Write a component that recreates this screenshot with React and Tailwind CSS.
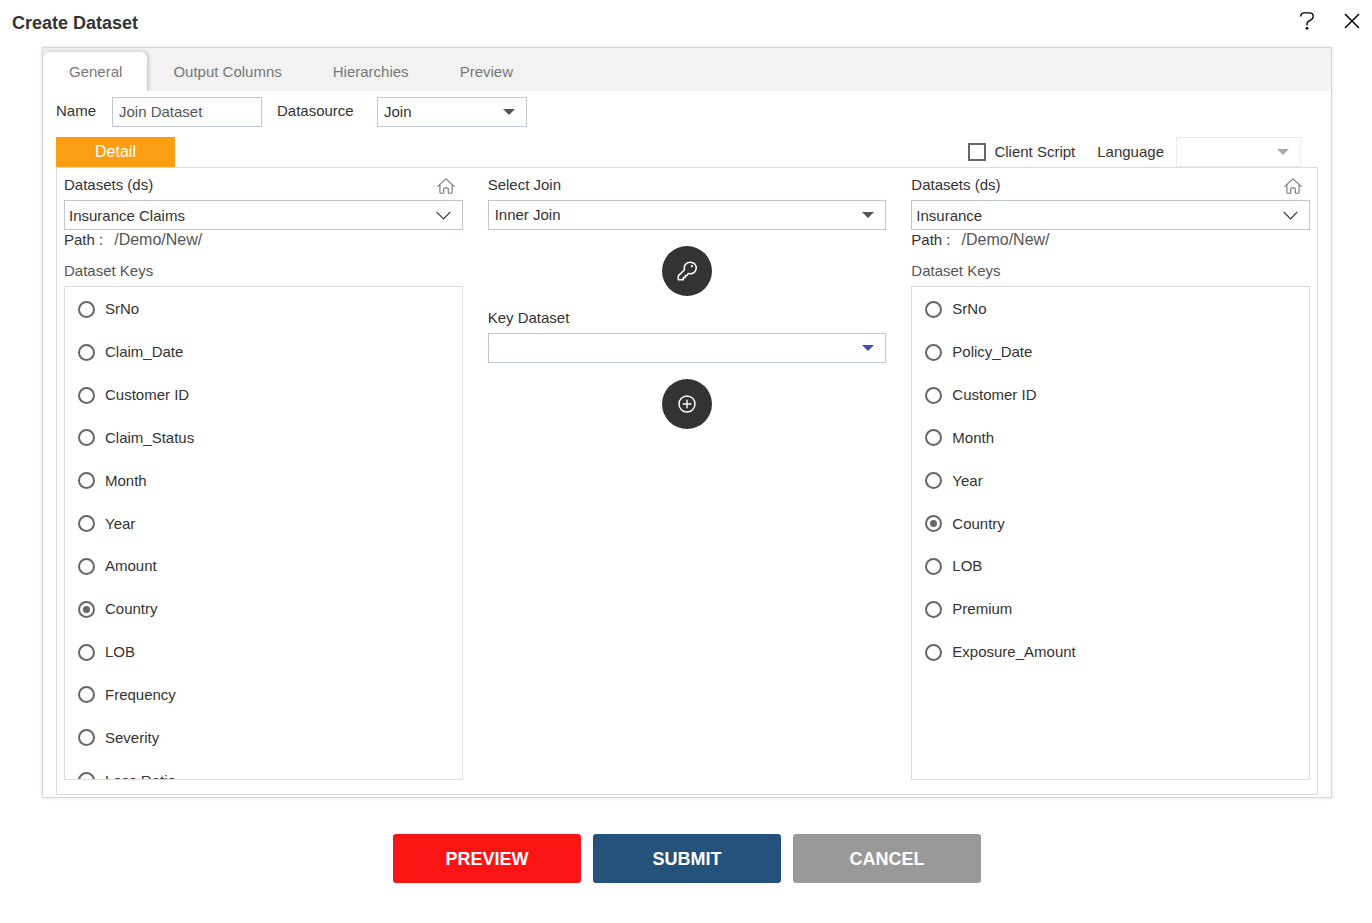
import React, { useState } from "react";

const TABS = ["General", "Output Columns", "Hierarchies", "Preview"];

const LEFT_KEYS = [
  "SrNo",
  "Claim_Date",
  "Customer ID",
  "Claim_Status",
  "Month",
  "Year",
  "Amount",
  "Country",
  "LOB",
  "Frequency",
  "Severity",
  "Loss Ratio",
];

const RIGHT_KEYS = [
  "SrNo",
  "Policy_Date",
  "Customer ID",
  "Month",
  "Year",
  "Country",
  "LOB",
  "Premium",
  "Exposure_Amount",
];

function HomeIcon() {
  return (
    <svg width="18" height="16" viewBox="0 0 18 16" fill="none" stroke="#777" strokeWidth="1.1" strokeLinecap="round" strokeLinejoin="round">
      <path d="M0.8 8.3 9 0.8l8.2 7.5" />
      <path d="M2.9 7v6.9c0 .8.5 1.3 1.3 1.3h2.5V11c0-.7.4-1.1 1.1-1.1h2.4c.7 0 1.1.4 1.1 1.1v4.2h2.5c.8 0 1.3-.5 1.3-1.3V7" />
    </svg>
  );
}

function KeyIcon() {
  return (
    <svg width="20" height="20" viewBox="0 0 20 20" fill="none" stroke="#fff" strokeWidth="1.5" strokeLinejoin="round">
      <path d="M13.1 1.2a5.8 5.8 0 0 0-5.6 7.5L1.3 14.9v3.9h5v-2.3h2v-2h1.9l1.1-2.1a5.8 5.8 0 1 0 1.8-11.2z" />
      <circle cx="14.9" cy="5.2" r="1.1" fill="#fff" stroke="none" />
    </svg>
  );
}

function PlusIcon() {
  return (
    <svg width="18" height="18" viewBox="0 0 18 18" fill="none" stroke="#fff" strokeWidth="1.4" strokeLinecap="round">
      <circle cx="9" cy="9" r="8" />
      <path d="M9 5.2v7.6M5.2 9h7.6" />
    </svg>
  );
}

/* Select with a filled triangle or a thin chevron on the right */
function SelectBox({ id, options, arrow = "triangle", className = "border-solid border-[#bfc7d5]", arrowColor = "text-[#555]", ...rest }) {
  return (
    <div className="relative h-[30px] w-full">
      <select
        id={id}
        className={`h-full w-full appearance-none border bg-white outline-none ${arrow === "chevron" ? "pt-0.5 pl-1" : "pl-1.5"} ${className}`}
        {...rest}
      >
        {options.map((option) => (
          <option key={option} value={option}>
            {option}
          </option>
        ))}
      </select>
      <span className={`pointer-events-none absolute inset-y-0 right-3 flex items-center ${arrowColor}`}>
        {arrow === "chevron" ? (
          <svg width="15" height="9" viewBox="0 0 15 9" fill="none" stroke="#333" strokeWidth="1.2">
            <path d="M0.6 0.9 7.5 7.8l6.9-6.9" />
          </svg>
        ) : (
          <svg width="12" height="6" viewBox="0 0 12 6" fill="currentColor">
            <path d="M0 0h12L6 6z" />
          </svg>
        )}
      </span>
    </div>
  );
}

function DatasetColumn({ side, dataset, keys, defaultKey }) {
  const [selected, setSelected] = useState(defaultKey);

  return (
    <div>
      <div className="flex h-8 items-center justify-between pt-0.5 pr-2">
        <label htmlFor={`${side}-dataset`}>Datasets (ds)</label>
        <button type="button" aria-label="Home" className="pt-0.5">
          <HomeIcon />
        </button>
      </div>
      <SelectBox id={`${side}-dataset`} options={[dataset]} arrow="chevron" />
      <div className="flex h-5 items-center gap-[11px]">
        <span>Path :</span>
        <span className="text-base text-[#555]">/Demo/New/</span>
      </div>
      <div className="flex h-9 items-center pt-1.5 text-[#555]">Dataset Keys</div>
      <div className="h-[494px] overflow-y-auto border border-[#ddd] pt-px [scrollbar-width:none]">
        <div role="radiogroup" aria-label="Dataset Keys" className="grid h-[514px] grid-rows-12 pl-[13px]">
          {keys.map((key) => (
            <label key={key} className="flex items-center gap-2.5">
              <input
                type="radio"
                name={`${side}-key`}
                checked={selected === key}
                onChange={() => setSelected(key)}
                className="grid size-[17px] appearance-none place-content-center rounded-full border-2 border-[#666] before:size-[7px] before:rounded-full checked:before:bg-[#666]"
              />
              <span>{key}</span>
            </label>
          ))}
        </div>
      </div>
    </div>
  );
}

export default function App() {
  const [activeTab, setActiveTab] = useState("General");
  const [name, setName] = useState("Join Dataset");

  return (
    <div className="bg-white font-['Liberation_Sans',Arial,sans-serif] text-[15px] leading-5 text-[#333]">
      {/* Header */}
      <header className="flex h-[47px] items-center justify-between px-3">
        <h1 className="pb-0.5 text-lg font-bold">Create Dataset</h1>
        <div className="flex items-center gap-[30px] pb-1.5">
          <button type="button" aria-label="Help">
            <svg width="14" height="18" viewBox="0 0 14 18" fill="none" stroke="#000" strokeWidth="1.4">
              <path d="M0.8 4.6V3.7C0.8 2 2.4.9 4.3.9h5.4c1.9 0 3.4 1.1 3.4 2.8v1.2c0 1.4-.8 2-1.8 2.7L8.4 9.4C7.3 10.2 7 10.8 7 12v1.6" />
              <circle cx="7" cy="16.3" r="1.4" fill="#000" stroke="none" />
            </svg>
          </button>
          <button type="button" aria-label="Close">
            <svg width="16" height="16" viewBox="0 0 16 16" fill="none" stroke="#000" strokeWidth="1.5">
              <path d="M1 1l14 14M15 1 1 15" />
            </svg>
          </button>
        </div>
      </header>

      <main className="pr-10 pl-[42px]">
        <section className="border border-[#d8d8d8] pb-0.5 shadow-[0_0_3px_rgba(0,0,0,0.15)]">
          {/* Tabs */}
          <div role="tablist" className="flex h-[43px] items-end overflow-hidden bg-[#f2f2f2] text-[#777]">
            {TABS.map((tab) => (
              <button
                key={tab}
                type="button"
                role="tab"
                aria-selected={activeTab === tab}
                onClick={() => setActiveTab(tab)}
                className={`h-[39px] rounded-t-md pr-[25px] pl-[26px] ${
                  activeTab === tab ? "bg-white shadow-[1px_0_4px_rgba(0,0,0,0.25)]" : ""
                }`}
              >
                {tab}
              </button>
            ))}
          </div>

          <div className="px-[13px] pt-1.5">
            {/* Name and source */}
            <div className="flex h-[30px] items-center">
              <label htmlFor="name" className="w-14 pb-0.5">Name</label>
              <input
                id="name"
                type="text"
                value={name}
                onChange={(e) => setName(e.target.value)}
                className="h-[30px] w-[150px] border border-[#bfc7d5] px-1.5 pb-0.5 text-[#555] outline-none"
              />
              <label htmlFor="datasource" className="ml-[15px] w-[100px] pb-0.5">Datasource</label>
              <div className="w-[150px]">
                <SelectBox id="datasource" options={["Join"]} />
              </div>
            </div>

            {/* Detail bar */}
            <div className="mt-2.5 flex h-[30px] items-center justify-between pr-[17px]">
              <button type="button" className="h-full w-[119px] bg-[#fb9e14] text-base text-white">
                Detail
              </button>
              <div className="flex items-center">
                <label className="flex items-center gap-2">
                  <input type="checkbox" className="size-[18px] appearance-none border-2 border-[#666] checked:bg-[#666]" />
                  Client Script
                </label>
                <label htmlFor="language" className="mr-3 ml-[22px]">Language</label>
                <div className="w-[125px]">
                  <SelectBox id="language" options={[""]} disabled className="border-dotted border-[#ddd]" arrowColor="text-[#aaa]" />
                </div>
              </div>
            </div>

            {/* Join editor */}
            <div className="grid grid-cols-3 gap-[25px] border border-[#ddd] px-[7px] pb-3.5">
              <DatasetColumn side="left" dataset="Insurance Claims" keys={LEFT_KEYS} defaultKey="Country" />

              <div className="flex flex-col items-center">
                <label htmlFor="join-type" className="flex h-8 w-full items-center pt-0.5">Select Join</label>
                <SelectBox id="join-type" options={["Inner Join", "Left Join", "Right Join", "Full Join"]} />
                <button type="button" aria-label="Add key" className="mt-4 flex size-[50px] items-center justify-center rounded-full bg-[#333]">
                  <KeyIcon />
                </button>
                <label htmlFor="key-dataset" className="mt-[5px] flex h-8 w-full items-center pt-0.5">Key Dataset</label>
                <SelectBox id="key-dataset" options={[""]} arrowColor="text-[#3f51b5]" />
                <button type="button" aria-label="Add dataset" className="mt-4 flex size-[50px] items-center justify-center rounded-full bg-[#333]">
                  <PlusIcon />
                </button>
              </div>

              <DatasetColumn side="right" dataset="Insurance" keys={RIGHT_KEYS} defaultKey="Country" />
            </div>
          </div>
        </section>

        {/* Actions */}
        <div className="flex justify-center gap-3 py-9 text-lg font-bold text-white">
          <button type="button" className="h-[49px] w-[188px] rounded-[3px] bg-[#fb1414]">PREVIEW</button>
          <button type="button" className="h-[49px] w-[188px] rounded-[3px] bg-[#24527a]">SUBMIT</button>
          <button type="button" className="h-[49px] w-[188px] rounded-[3px] bg-[#999]">CANCEL</button>
        </div>
      </main>
    </div>
  );
}
